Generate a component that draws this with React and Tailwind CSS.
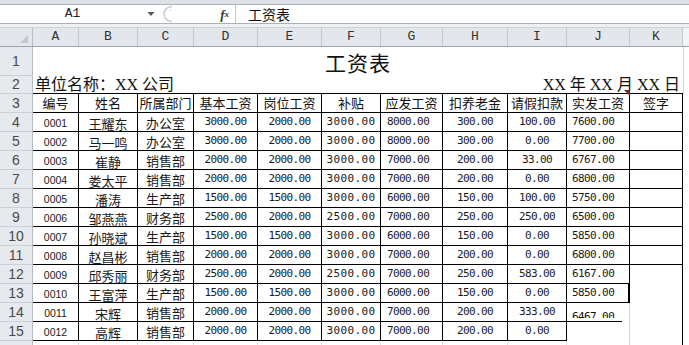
import React from "react";

const W = [
  "w-[33px]",
  "w-[46px]",
  "w-[59px]",
  "w-[56px]",
  "w-[64px]",
  "w-[64px]",
  "w-[59px]",
  "w-[62px]",
  "w-[65px]",
  "w-[59px]",
  "w-[63px]",
  "w-[53px]",
  "w-[6px]",
];

const LETTERS = ["A", "B", "C", "D", "E", "F", "G", "H", "I", "J", "K"];
const HEAD = ["编号", "姓名", "所属部门", "基本工资", "岗位工资", "补贴", "应发工资", "扣养老金", "请假扣款", "实发工资", "签字"];

const DATA = [
  ["0001", "王耀东", "办公室", "3000.00", "2000.00", "3000.00", "8000.00", "300.00", "100.00", "7600.00"],
  ["0002", "马一鸣", "办公室", "3000.00", "2000.00", "3000.00", "8000.00", "300.00", "0.00", "7700.00"],
  ["0003", "崔静", "销售部", "2000.00", "2000.00", "3000.00", "7000.00", "200.00", "33.00", "6767.00"],
  ["0004", "娄太平", "销售部", "2000.00", "2000.00", "3000.00", "7000.00", "200.00", "0.00", "6800.00"],
  ["0005", "潘涛", "生产部", "1500.00", "1500.00", "3000.00", "6000.00", "150.00", "100.00", "5750.00"],
  ["0006", "邹燕燕", "财务部", "2500.00", "2000.00", "2500.00", "7000.00", "250.00", "250.00", "6500.00"],
  ["0007", "孙晓斌", "生产部", "1500.00", "1500.00", "3000.00", "6000.00", "150.00", "0.00", "5850.00"],
  ["0008", "赵昌彬", "销售部", "2000.00", "2000.00", "3000.00", "7000.00", "200.00", "0.00", "6800.00"],
  ["0009", "邱秀丽", "财务部", "2500.00", "2000.00", "2500.00", "7000.00", "250.00", "583.00", "6167.00"],
  ["0010", "王富萍", "生产部", "1500.00", "1500.00", "3000.00", "6000.00", "150.00", "0.00", "5850.00"],
  ["0011", "宋辉", "销售部", "2000.00", "2000.00", "3000.00", "7000.00", "200.00", "333.00", "6467.00"],
  ["0012", "高辉", "销售部", "2000.00", "2000.00", "3000.00", "7000.00", "200.00", "0.00", ""],
];

const CJK = "font-['Noto_Sans_CJK_SC',sans-serif]";
const MONO = "font-['DejaVu_Sans_Mono',monospace]";

function RowNum({ n, h }) {
  return (
    <div
      className={`w-[33px] shrink-0 bg-[#e6e9ed] border-r border-b border-r-[#b6bcc4] border-b-[#cbd0d6] flex items-center justify-center font-['Liberation_Sans',sans-serif] text-[14px] text-[#4a4a4a] ${h}`}
    >
      {n}
    </div>
  );
}

function borderFor(r, c) {
  if (c === 10 && r >= 8) return "border-r border-black";
  if (c === 9 && r === 9) return "border-r-2 border-b border-black";
  if (c === 9 && r >= 10) return "border-r border-[#d9d9d9]";
  return "border-r border-b border-black";
}

function alignFor(c) {
  switch (c) {
    case 0:
      return "justify-center pt-[3px] font-['Liberation_Sans',sans-serif] text-[10.5px]";
    case 1:
      return `justify-center pt-[4px] ${CJK} text-[13px]`;
    case 2:
      return `justify-center pt-[2px] ${CJK} text-[13px]`;
    case 5:
      return `justify-center ${MONO} text-[11px] tracking-[0.4px]`;
    case 6:
      return `justify-start pl-[6px] ${MONO} text-[11px] tracking-[-0.6px]`;
    case 9:
      return `justify-start pl-[5px] ${MONO} text-[11px] tracking-[-0.6px]`;
    default:
      return `justify-center ${MONO} text-[11px] tracking-[-0.6px]`;
  }
}

export default function App() {
  return (
    <div className="w-[689px] h-[345px] overflow-hidden bg-white text-[#111]">
      {/* ribbon edge */}
      <div className="h-[4px] bg-[#dde1e6]" />
      {/* formula bar */}
      <div className="h-[20px] flex items-center border-y border-[#aab1ba] bg-white">
        <div className="w-[145px] flex items-center justify-center font-['Liberation_Mono',monospace] text-[13px] text-[#222]">
          A1
        </div>
        <svg width="8" height="6" viewBox="0 0 8 6" className="ml-[2px]">
          <polygon points="0.5,1 7.5,1 4,5" fill="#555" />
        </svg>
        <svg width="20" height="18" viewBox="0 0 20 18" className="ml-[4px]">
          <path d="M13 1.5 A 8 7.5 0 0 0 13 16.5" stroke="#c9cdd3" strokeWidth="1.6" fill="none" />
          <path d="M10 5 L13 5" stroke="#d6dadf" strokeWidth="1" />
        </svg>
        <div className="w-[50px] flex items-center justify-end font-['Liberation_Serif',serif] italic font-bold text-[13px] text-[#333] leading-none">
          f<span className="text-[9px]">x</span>
        </div>
        <div className="ml-[6px] w-px h-full bg-[#c2c7ce]" />
        <div className={`pl-[12px] ${CJK} text-[14px] leading-none text-[#111]`}>工资表</div>
      </div>
      <div className="h-[3px] bg-[#eef0f3]" />

      {/* column header */}
      <div className="flex h-[20px] bg-[#e3e7ec] border-t border-b border-t-[#cdd2d8] border-b-[#9ea6b0]">
        <div className="w-[33px] shrink-0 border-r border-[#b6bcc4] relative">
          <svg width="10" height="10" viewBox="0 0 10 10" className="absolute right-[3px] bottom-[2px]">
            <polygon points="9,1 9,9 1,9" fill="#c3c7cc" />
          </svg>
        </div>
        {LETTERS.map((l, i) => (
          <div
            key={l}
            className={`${W[i + 1]} shrink-0 border-r border-[#c3c9d0] flex items-center justify-center font-['Liberation_Mono',monospace] text-[13px] text-[#333]`}
          >
            {l}
          </div>
        ))}
        <div className="flex-1 bg-[#f3f4f6]" />
      </div>

      {/* row 1: title */}
      <div className="flex h-[29px]">
        <RowNum n="1" h="h-[29px]" />
        <div className={`w-[650px] flex items-center justify-center ${CJK} text-[21px] tracking-[1px] text-[#111] pt-[2px]`}>
          工资表
        </div>
        <div className="w-[6px] border-l border-[#d0d4da]" />
      </div>

      {/* row 2: company / date */}
      <div className="flex h-[18px]">
        <RowNum n="2" h="h-[18px]" />
        <div className="w-[650px] flex items-end justify-between border-b border-black pl-[2px] pr-[3px] font-['Liberation_Serif','Noto_Sans_CJK_SC',serif] text-[16px] leading-[17px] text-[#111]">
          <span>单位名称：XX 公司</span>
          <span className="whitespace-pre">XX 年 XX 月 XX 日</span>
        </div>
        <div className="w-[6px] border-l border-[#d0d4da]" />
      </div>

      {/* row 3: table header */}
      <div className="flex h-[19px]">
        <RowNum n="3" h="h-[19px]" />
        {HEAD.map((t, i) => (
          <div
            key={t}
            className={`${W[i + 1]} shrink-0 relative border-r border-b border-black flex items-center justify-center ${CJK} text-[13px] text-[#111]`}
          >
            {t}
            {i === 9 && (
              <svg width="6" height="6" viewBox="0 0 6 6" className="absolute -top-[4px] -right-[1px]">
                <polygon points="0,0 6,0 6,6" fill="#7d2626" />
              </svg>
            )}
          </div>
        ))}
        <div className="w-[6px]" />
      </div>

      {/* data rows */}
      {DATA.map((row, r) => (
        <div key={r} className="flex h-[19px]">
          <RowNum n={String(r + 4)} h="h-[19px]" />
          {[...row, ""].map((v, c) => {
            if (c === 9 && r === 10) {
              return (
                <div key={c} className={`${W[c + 1]} shrink-0 ${borderFor(r, c)} flex flex-col`}>
                  <div className="w-[55px] h-[19px] border-b border-black overflow-hidden">
                    <div className={`h-[15px] overflow-hidden pl-[5px] pt-[8px] ${MONO} text-[11px] tracking-[-0.6px] leading-[11px]`}>
                      {v}
                    </div>
                  </div>
                </div>
              );
            }
            return (
              <div
                key={c}
                className={`${W[c + 1]} shrink-0 ${borderFor(r, c)} flex items-center ${alignFor(c)} text-[#1a1a1a] whitespace-nowrap`}
              >
                {v}
              </div>
            );
          })}
          <div className="w-[6px]" />
        </div>
      ))}

      {/* row 16 partial */}
      <div className="flex h-[4px]">
        <div className="w-[33px] shrink-0 bg-[#e6e9ed] border-r border-[#b6bcc4]" />
        {LETTERS.map((l, i) => (
          <div
            key={l}
            className={`${W[i + 1]} shrink-0 ${i === 10 ? "border-r border-black" : i === 9 ? "border-r border-[#d9d9d9]" : "border-r border-[#dde0e4]"}`}
          />
        ))}
        <div className="w-[6px]" />
      </div>
    </div>
  );
}
